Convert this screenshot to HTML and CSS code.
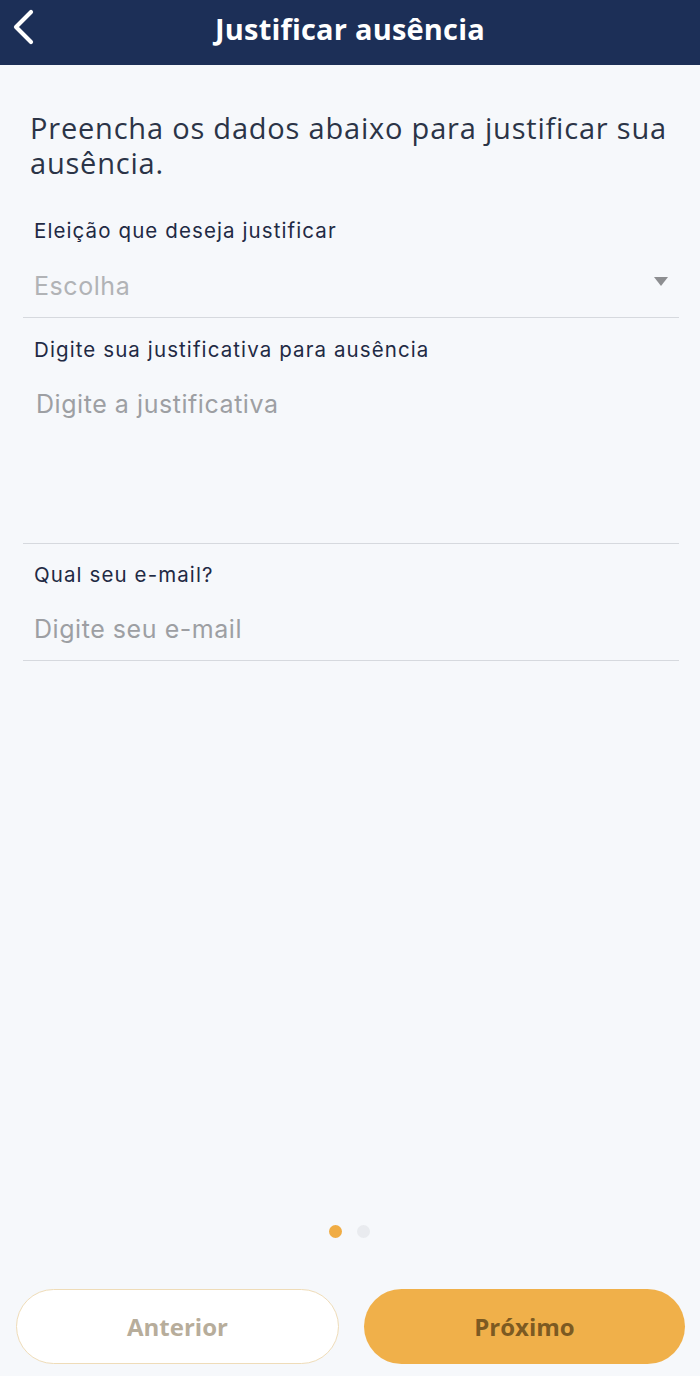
FILE: index.html
```html
<!DOCTYPE html>
<html lang="pt-BR">
<head>
<meta charset="utf-8">
<title>Justificar ausência</title>
<link rel="stylesheet" href="styles.css">
</head>
<body>
<div class="page">
  <header class="topbar">
    <button class="back" aria-label="Voltar">
      <svg width="24" height="36" viewBox="0 0 24 36"><path d="M20 3 L5 18 L20 33" fill="none" stroke="#ffffff" stroke-width="4.2" stroke-linecap="round" stroke-linejoin="round"/></svg>
    </button>
    <h1 class="title">Justificar ausência</h1>
  </header>

  <main class="content">
    <p class="intro">Preencha os dados abaixo para justificar sua ausência.</p>

    <div class="field">
      <label class="label">Eleição que deseja justificar</label>
      <div class="select">
        <span class="placeholder">Escolha</span>
        <span class="caret"></span>
      </div>
    </div>

    <div class="field">
      <label class="label">Digite sua justificativa para ausência</label>
      <div class="textarea"><span class="placeholder">Digite a justificativa</span></div>
    </div>

    <div class="field">
      <label class="label">Qual seu e-mail?</label>
      <div class="input"><span class="placeholder">Digite seu e-mail</span></div>
    </div>
  </main>

  <footer class="footer">
    <div class="dots">
      <span class="dot active"></span>
      <span class="dot"></span>
    </div>
    <div class="buttons">
      <button class="btn btn-prev">Anterior</button>
      <button class="btn btn-next">Próximo</button>
    </div>
  </footer>
</div>
</body>
</html>
```

FILE: styles.css
```css
* { box-sizing: border-box; }
html, body { margin: 0; padding: 0; }
body {
  background: #f6f8fb;
  font-family: Inter, Roboto, "Liberation Sans", sans-serif;
}
.page {
  min-height: 1376px;
  display: flex;
  flex-direction: column;
}
.topbar {
  height: 65px;
  background: #1c2f57;
  display: flex;
  align-items: center;
  justify-content: center;
  position: relative;
}
.back {
  position: absolute;
  left: 8px;
  top: 9px;
  background: none;
  border: 0;
  padding: 0;
  width: 30px;
  height: 36px;
}
.title {
  margin: -9px 0 0 0;
  color: #ffffff;
  font-family: "Open Sans", sans-serif;
  font-weight: 700;
  font-size: 29px;
  letter-spacing: 0.2px;
}
.content {
  flex: 1;
  padding: 45px 21px 0 23px;
}
.intro {
  margin: 0 0 19.5px 7px;
  font-family: "Open Sans", sans-serif;
  font-size: 29px;
  line-height: 35px;
  letter-spacing: 0.8px;
  color: #2b3447;
}
.field {
  padding-top: 18.5px;
  border-bottom: 1.5px solid #d6d9de;
}
.label {
  display: block;
  padding-left: 11px;
  font-size: 20.5px;
  line-height: 26px;
  letter-spacing: 1.1px;
  color: #1f2a44;
}
.placeholder {
  font-size: 25px;
  line-height: 30px;
  letter-spacing: 0.55px;
  color: #9d9fa3;
}
.select {
  display: flex;
  align-items: center;
  justify-content: space-between;
  padding: 27px 11px 16px 11px;
}
.select .placeholder { color: #b1b3b6; }
.caret {
  width: 0;
  height: 0;
  border-left: 7px solid transparent;
  border-right: 7px solid transparent;
  border-top: 9px solid #8d8e91;
  margin-top: -10px;
}
.textarea {
  height: 180px;
  padding: 26px 14px 0 13px;
}
.input {
  padding: 26px 11px 16px 11px;
}

.footer {
  padding: 0 15px 12px 16px;
}
.dots {
  display: flex;
  justify-content: center;
  gap: 15px;
  margin-bottom: 51px;
  padding-right: 2px;
}
.dot {
  width: 13px;
  height: 13px;
  border-radius: 50%;
  background: #e9ebef;
}
.dot.active { background: #f0ac44; }
.buttons {
  display: flex;
  gap: 25px;
}
.btn {
  flex: 1;
  height: 75px;
  border-radius: 38px;
  font-family: "Open Sans", sans-serif;
  font-weight: 700;
  font-size: 24px;
}
.btn-prev {
  background: #ffffff;
  border: 1.5px solid #efdcb8;
  color: #b7ad9b;
}
.btn-next {
  background: #f0b04a;
  border: 0;
  color: #7c5a22;
}
```
